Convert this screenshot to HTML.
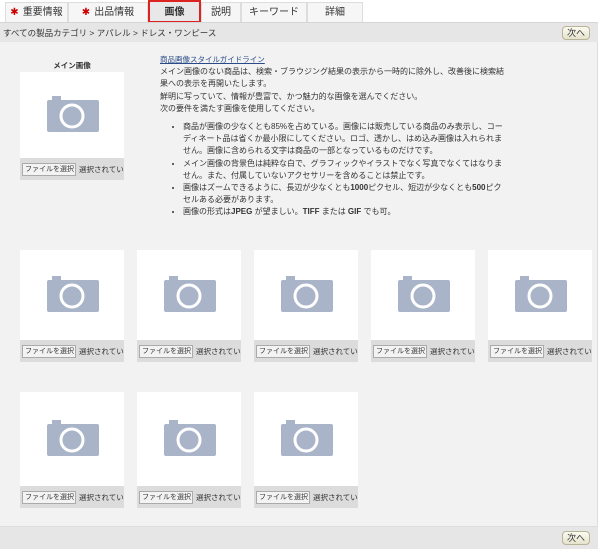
<!DOCTYPE html>
<html><head><meta charset="utf-8"><style>
*{margin:0;padding:0;box-sizing:border-box}
body{width:600px;height:549px;background:#fff;font-family:"Liberation Sans","Noto Sans CJK JP",sans-serif;font-size:9px;color:#333;position:relative;overflow:hidden}
.tab{position:absolute;top:2px;height:20px;background:#f6f6f6;border:1px solid #ddd;border-bottom:none;text-align:center;line-height:19px;font-size:10px;color:#333}
.tab b{color:#c00;font-weight:normal;margin-right:4px}
.bar{position:absolute;left:0;width:598px;background:#e6e6e6;border-top:1px solid #d6d6d6}
.main{position:absolute;left:0;top:42px;width:598px;height:484px;background:#f2f2f2;border-right:1px solid #ddd}
.btn{position:absolute;right:8px;width:28px;height:14px;border:1px solid #b8b49a;border-radius:4px;background:linear-gradient(#fbfbf0,#e6e3cc);font-size:9px;text-align:center;line-height:12px;color:#333}
.box{position:absolute;width:104px;background:#fff}
.box .g{position:absolute;left:0;right:0;bottom:0;height:22px;background:#dcdcdc}
.box .f{position:absolute;left:2px;bottom:4px;height:13px;width:54px;padding:0 2px;border:1px solid #aaa;background:#f3f3f3;font-size:7px;line-height:11px;white-space:nowrap;overflow:hidden}
.box .s{position:absolute;left:59px;bottom:5px;font-size:7.5px;white-space:nowrap;width:45px;overflow:hidden}
.box svg{position:absolute;left:27px}
.txt{position:absolute;left:160px;top:54px;width:347px;font-size:8px;line-height:12.2px;color:#333}
.txt a{color:#2a4a8a;text-decoration:underline;font-size:7.5px}
ul{margin:6px 0 0 23px;list-style:disc}
</style></head><body>
<div class="tab" style="left:5px;width:63px"><b>✱</b>重要情報</div>
<div class="tab" style="left:68px;width:80px"><b>✱</b>出品情報</div>
<div class="tab" style="left:148px;width:53px;top:0;height:23px;border:2px solid #d22;background:#e8e8e8;line-height:21px;font-weight:bold">画像</div>
<div class="tab" style="left:201px;width:40px">説明</div>
<div class="tab" style="left:241px;width:66px">キーワード</div>
<div class="tab" style="left:307px;width:56px">詳細</div>
<div class="bar" style="top:22px;height:20px"><span style="position:absolute;left:3px;top:4px;font-size:8.5px">すべての製品カテゴリ &gt; アパレル &gt; ドレス・ワンピース</span><div class="btn" style="top:3px">次へ</div></div>
<div class="main"></div>
<div class="bar" style="top:526px;height:23px;border-top:1px solid #ddd"><div class="btn" style="top:4px">次へ</div></div>
<div style="position:absolute;left:20px;top:60px;width:104px;text-align:center;font-size:7.5px;font-weight:bold">メイン画像</div>
<div class="txt"><a>商品画像スタイルガイドライン</a><br>メイン画像のない商品は、検索・ブラウジング結果の表示から一時的に除外し、改善後に検索結果への表示を再開いたします。<br>鮮明に写っていて、情報が豊富で、かつ魅力的な画像を選んでください。<br>次の要件を満たす画像を使用してください。
<ul><li>商品が画像の少なくとも85%を占めている。画像には販売している商品のみ表示し、コーディネート品は省くか最小限にしてください。ロゴ、透かし、はめ込み画像は入れられません。画像に含められる文字は商品の一部となっているものだけです。</li><li>メイン画像の背景色は純粋な白で、グラフィックやイラストでなく写真でなくてはなりません。また、付属していないアクセサリーを含めることは禁止です。</li><li>画像はズームできるように、長辺が少なくとも<b>1000</b>ピクセル、短辺が少なくとも<b>500</b>ピクセルある必要があります。</li><li>画像の形式は<b>JPEG</b> が望ましい。<b>TIFF</b> または <b>GIF</b> でも可。</li></ul></div>
<div id="boxes"></div>
<script>
var cam='<svg width="52" height="38" viewBox="0 0 52 38"><rect x="5" y="0" width="9" height="6" fill="#aab4c8"/><rect x="0" y="4" width="52" height="32" rx="2" fill="#aab4c8"/><circle cx="25" cy="20" r="11" fill="#aab4c8" stroke="#fff" stroke-width="3"/></svg>';
var pos=[[20,72,108]];
[20,137,254,371,488].forEach(function(x){pos.push([x,250,112])});
[20,137,254].forEach(function(x){pos.push([x,392,116])});
var h='';pos.forEach(function(p){h+='<div class="box" style="left:'+p[0]+'px;top:'+p[1]+'px;height:'+p[2]+'px">'+cam.replace('<svg','<svg style="top:'+(p[2]/2-30)+'px"')+'<div class="g"><span class="f">ファイルを選択</span><span class="s">選択されていません</span></div></div>'});
document.getElementById('boxes').innerHTML=h;
</script>
</body></html>
